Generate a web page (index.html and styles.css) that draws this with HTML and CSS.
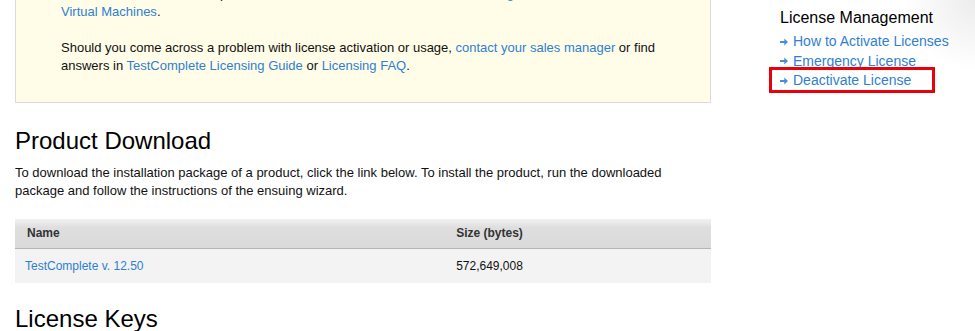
FILE: index.html
```html
<!DOCTYPE html>
<html lang="en">
<head>
  <meta charset="UTF-8" />
  <meta name="viewport" content="width=device-width, initial-scale=1.0"/>
  <title>TestComplete Licensing</title>
  <link rel="stylesheet" href="styles.css">
</head>
<body>
  <div class="page">

    <!-- MAIN COLUMN -->
    <div class="main">
      <div class="notice">
        <p>To activate licenses on computers that run in <b>virtual environments</b>, see <a href="#">Using Licenses on</a><br>
          <a href="#">Virtual Machines</a>.</p>
        <p>Should you come across a problem with license activation or usage, <a href="#">contact your sales manager</a> or find
          answers in <a href="#">TestComplete Licensing Guide</a> or <a href="#">Licensing FAQ</a>.</p>
      </div>

      <h2>Product Download</h2>
      <p class="intro">To download the installation package of a product, click the link below. To install the product, run the downloaded
        package and follow the instructions of the ensuing wizard.</p>

      <table class="downloads">
        <thead>
          <tr>
            <th class="col-name">Name</th>
            <th class="col-size">Size (bytes)</th>
          </tr>
        </thead>
        <tbody>
          <tr>
            <td class="col-name"><a href="#">TestComplete v. 12.50</a></td>
            <td class="col-size">572,649,008</td>
          </tr>
        </tbody>
      </table>

      <h2 class="keys">License Keys</h2>
    </div>

    <!-- SIDEBAR -->
    <div class="sidebar">
      <h3>License Management</h3>
      <ul class="side-links">
        <li>
          <svg class="arrow" width="8" height="8" viewBox="0 0 8 8"><path d="M0 3h4.3V0.4L8 4 4.3 7.6V5H0z" fill="#4a8fd6"/></svg>
          <a href="#">How to Activate Licenses</a>
        </li>
        <li>
          <svg class="arrow" width="8" height="8" viewBox="0 0 8 8"><path d="M0 3h4.3V0.4L8 4 4.3 7.6V5H0z" fill="#4a8fd6"/></svg>
          <a href="#">Emergency License</a>
        </li>
        <li class="marked">
          <svg class="arrow" width="8" height="8" viewBox="0 0 8 8"><path d="M0 3h4.3V0.4L8 4 4.3 7.6V5H0z" fill="#4a8fd6"/></svg>
          <a href="#">Deactivate License</a>
          <span class="highlight"></span>
        </li>
      </ul>
    </div>

  </div>
</body>
</html>
```

FILE: styles.css
```css
html, body {
  margin: 0;
  padding: 0;
  height: 100%;
  overflow: hidden;
  font-family: "Liberation Sans", Arial, sans-serif;
  font-size: 13px;
  color: #111;
  background: #fff;
}

a {
  color: #2f7fd0;
  text-decoration: none;
}

.page {
  display: flex;
  align-items: flex-start;
  gap: 69px;
  padding-left: 15px;
  min-height: 100%;
  background: radial-gradient(circle at 100% 0, #ececec 0, rgba(255, 255, 255, 0) 70px);
}

.main {
  width: 696px;
  flex-shrink: 0;
}

/* YELLOW NOTICE (page is scrolled, so its top is off screen) */
.notice {
  margin-top: -26px;
  padding: 11px 45px 27px 45px;
  background: #fffde8;
  border: 1px solid #dcdcd6;
  border-top: none;
  line-height: 18px;
}

.notice p {
  margin: 0 0 18px;
}

.notice p:last-child {
  margin-bottom: 0;
}

.notice b {
  color: #000;
}

h2 {
  margin: 23px 0 0;
  font-size: 24px;
  font-weight: normal;
  line-height: 30px;
  color: #000;
}

.intro {
  margin: 8px 0 0;
  line-height: 18px;
}

/* DOWNLOAD TABLE */
.downloads {
  width: 100%;
  margin-top: 19px;
  border-collapse: collapse;
}

.downloads th,
.downloads td {
  box-sizing: border-box;
  padding: 0;
  font-size: 12px;
}

.downloads thead th {
  height: 29px;
  font-weight: bold;
  color: #333;
  background: linear-gradient(#f1f1f1, #dedede 30%, #dadada);
  border-bottom: 1px solid #b5b5b5;
}

.downloads tbody td {
  height: 35px;
  color: #111;
  background: #f3f3f3;
}

.downloads .col-name {
  width: 253px;
  text-align: left;
}

.downloads th.col-name {
  padding-left: 12px;
}

.downloads td.col-name {
  padding-left: 10px;
}

.downloads .col-size {
  text-align: center;
}

h2.keys {
  margin-top: 21px;
}

/* SIDEBAR */
.sidebar {
  padding-top: 8px;
}

.sidebar h3 {
  margin: 0 0 4px;
  font-size: 16px;
  font-weight: normal;
  line-height: 20px;
  color: #000;
}

.side-links {
  list-style: none;
  margin: 0;
  padding: 0;
}

.side-links li {
  position: relative;
  display: flex;
  align-items: center;
  gap: 5px;
  font-size: 14px;
  line-height: 19.5px;
}

.arrow {
  flex-shrink: 0;
}

.highlight {
  position: absolute;
  left: -11px;
  top: -4px;
  width: 160px;
  height: 20px;
  border: 3px solid #e8000b;
  pointer-events: none;
}
```
